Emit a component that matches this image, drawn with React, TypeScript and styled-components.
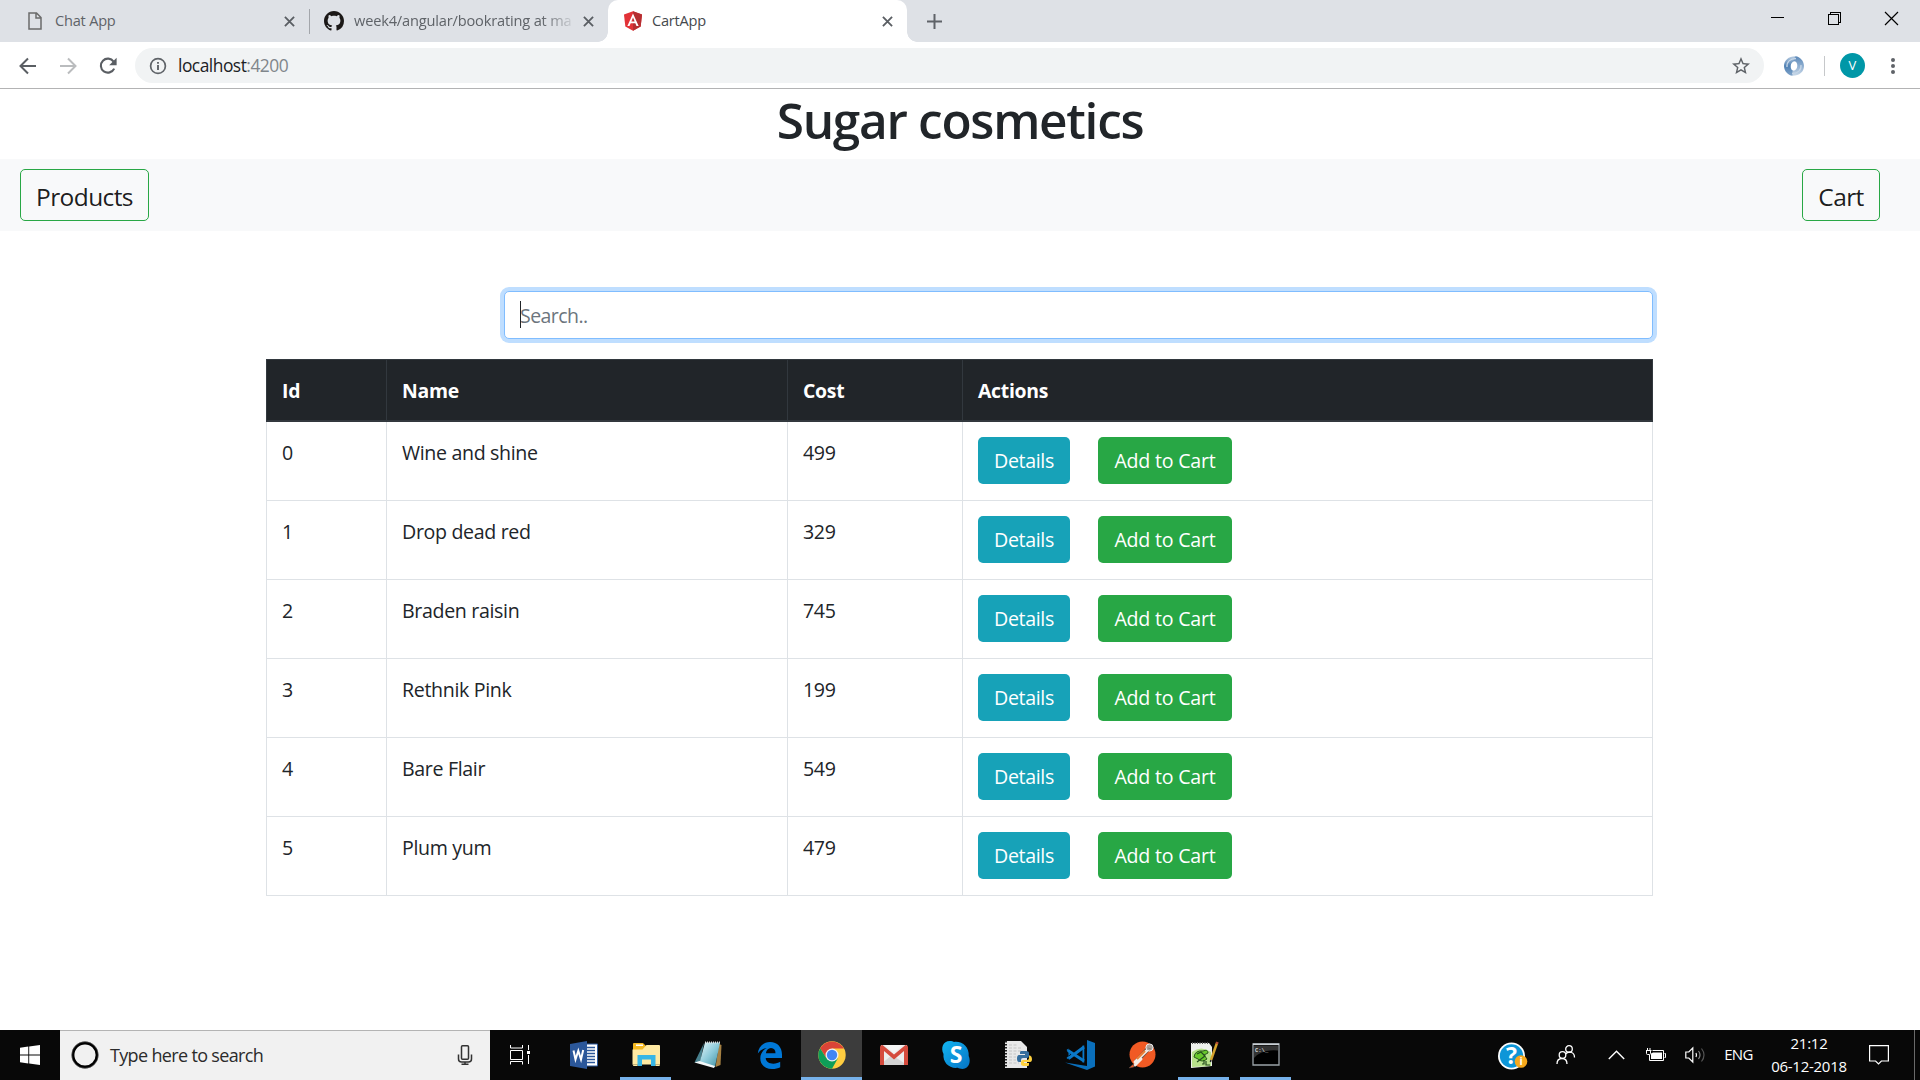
import React from "react";
import styled, { createGlobalStyle } from "styled-components";

const GlobalStyle = createGlobalStyle`
  *, *::before, *::after { box-sizing: border-box; }
  html, body { margin: 0; padding: 0; background: #fff; }
  body { font-family: "Open Sans", "Noto Sans", sans-serif; font-size: 20px; line-height: 1.5; color: #212529; overflow: hidden; }
  svg { display: block; flex: none; overflow: visible; }
`;

const Screen = styled.div`
  display: flex;
  flex-direction: column;
  width: 1920px;
  height: 1080px;
  overflow: hidden;
`;

/* ---------- browser chrome ---------- */

const TabStrip = styled.div`
  display: flex;
  height: 42px;
  background: #dee1e6;
  flex: none;
`;

const Tab = styled.div<{ $width: number; $left: number; $active?: boolean }>`
  position: relative;
  display: flex;
  align-items: center;
  width: ${(p) => p.$width}px;
  padding-left: ${(p) => p.$left}px;
  padding-right: 14px;
  background: ${(p) => (p.$active ? "#fff" : "transparent")};
  border-radius: ${(p) => (p.$active ? "10px 10px 0 0" : "0")};
  color: ${(p) => (p.$active ? "#45494d" : "#5f6368")};
  ${(p) =>
    p.$active &&
    `&::before, &::after {
      content: "";
      position: absolute;
      bottom: 0;
      width: 10px;
      height: 10px;
    }
    &::before { left: -10px; background: radial-gradient(circle at 0 0, transparent 9.5px, #fff 10px); }
    &::after { right: -10px; background: radial-gradient(circle at 100% 0, transparent 9.5px, #fff 10px); }`}
`;

const TabTitle = styled.span<{ $gap: number; $fade?: boolean }>`
  flex: 1;
  min-width: 0;
  margin-left: ${(p) => p.$gap}px;
  margin-right: ${(p) => (p.$fade ? 6 : 9)}px;
  padding-bottom: 2px;
  font-size: 14.6px;
  letter-spacing: ${(p) => (p.$fade ? -0.17 : -0.22)}px;
  line-height: 22px;
  white-space: nowrap;
  ${(p) => p.$fade && "mask-image: linear-gradient(90deg, #000 84%, transparent 100%);"}
`;

const TabDivider = styled.div`
  width: 1px;
  height: 25px;
  margin-top: 9px;
  background: #a3a6ab;
`;

const NewTab = styled.div`
  display: flex;
  align-items: center;
  margin-left: 20px;
`;

const WindowControls = styled.div`
  display: flex;
  align-items: flex-start;
  gap: 44px;
  margin-left: auto;
  padding: 12px 22px 0 0;
`;

const Toolbar = styled.div`
  display: flex;
  align-items: center;
  height: 47px;
  padding: 1px 24px 0 18px;
  border-bottom: 1px solid #b3b3b4;
  background: #fff;
  flex: none;
`;

const NavIcons = styled.div`
  display: flex;
  gap: 20px;
  width: 117px;
`;

const Omnibox = styled.div`
  display: flex;
  align-items: center;
  width: 1629px;
  height: 35px;
  padding: 0 14px 0 14px;
  border-radius: 18px;
  background: #f1f3f4;
`;

const Url = styled.span`
  flex: 1;
  margin-left: 11px;
  padding-bottom: 2px;
  font-size: 17.4px;
  letter-spacing: -0.5px;
  line-height: 26px;
  color: #202124;
`;

const Port = styled.span`
  color: #80868b;
`;

const ExtensionSlot = styled.div`
  margin-left: 20px;
`;

const ToolbarDivider = styled.div`
  width: 1px;
  height: 20px;
  margin: 0 15px 0 20px;
  background: #c6c8ca;
`;

const Avatar = styled.div`
  width: 25px;
  height: 25px;
  margin-right: auto;
  border-radius: 50%;
  background: #0097a7;
  color: #fff;
  font-size: 13px;
  line-height: 24px;
  text-align: center;
`;

/* ---------- shop page ---------- */

const Page = styled.main`
  flex: 1;
  display: flex;
  flex-direction: column;
  background: #fff;
`;

const Title = styled.h1`
  margin: 0 0 9px;
  padding-top: 1px;
  font-size: 49.5px;
  font-weight: 600;
  letter-spacing: -1.28px;
  line-height: 60px;
  text-align: center;
`;

const NavBar = styled.nav`
  display: flex;
  justify-content: space-between;
  height: 72px;
  padding: 10px 40px 10px 20px;
  background: #f8f9fa;
`;

const NavButton = styled.button<{ $width: number }>`
  width: ${(p) => p.$width}px;
  height: 52px;
  padding: 3px 0 0;
  border: 1px solid #28a745;
  border-radius: 5px;
  background: transparent;
  color: rgba(0, 0, 0, 0.9);
  font: 24.5px/47px "Open Sans", "Noto Sans", sans-serif;
  letter-spacing: -0.6px;
  white-space: nowrap;
`;

const Container = styled.section`
  display: flex;
  flex-direction: column;
  width: 1387px;
  margin: 60px 0 0 266px;
`;

const SearchField = styled.div`
  position: relative;
  align-self: flex-end;
  width: 1149px;
  height: 48px;
  margin-bottom: 20px;
`;

const SearchInput = styled.input`
  width: 100%;
  height: 100%;
  padding: 0 15px;
  border: 1px solid #80bdff;
  border-radius: 5px;
  outline: none;
  box-shadow: 0 0 0 4px #bfdeff;
  font: 19.5px "Open Sans", "Noto Sans", sans-serif;
  letter-spacing: -0.55px;
  &::placeholder { color: #6c757d; opacity: 1; }
`;

const Caret = styled.span`
  position: absolute;
  left: 16px;
  top: 10px;
  width: 1px;
  height: 27px;
  background: #212529;
`;

const Table = styled.div`
  display: flex;
  flex-direction: column;
`;

const columns = "120px 401px 175px 691px";

const HeadRow = styled.div`
  display: grid;
  grid-template-columns: ${columns};
  height: 63px;
  background: #212529;
  border-top: 1px solid #32383e;
  border-bottom: 2px solid #32383e;
  color: #fff;
  font-weight: 700;
`;

const BodyRow = styled.div`
  display: grid;
  grid-template-columns: ${columns};
  height: 79px;
  border-bottom: 1px solid #dee2e6;
`;

const Cell = styled.div<{ $head?: boolean }>`
  padding: 16px 15px 14px;
  border-left: 1px solid ${(p) => (p.$head ? "#32383e" : "#dee2e6")};
  font-size: ${(p) => (p.$head ? 19.4 : 19.6)}px;
  letter-spacing: ${(p) => (p.$head ? -0.28 : -0.34)}px;
  line-height: 30px;
  &:last-child { border-right: 1px solid ${(p) => (p.$head ? "#32383e" : "#dee2e6")}; }
`;

const ActionCell = styled(Cell)`
  display: flex;
  align-items: flex-start;
  gap: 28px;
  padding-top: 15px;
`;

const ActionButton = styled.button<{ $tone: "info" | "success" }>`
  width: ${(p) => (p.$tone === "info" ? 92 : 134)}px;
  height: 47px;
  padding: 0;
  border: 0;
  border-radius: 5px;
  background: ${(p) => (p.$tone === "info" ? "#17a2b8" : "#28a745")};
  color: #fff;
  font: 19.6px/46px "Open Sans", "Noto Sans", sans-serif;
  letter-spacing: ${(p) => (p.$tone === "info" ? -0.35 : -0.22)}px;
  white-space: nowrap;
`;

/* ---------- taskbar ---------- */

const Taskbar = styled.footer`
  display: flex;
  height: 50px;
  background: #080808;
  color: #fff;
  flex: none;
`;

const StartButton = styled.div`
  display: flex;
  align-items: center;
  width: 60px;
  padding-left: 20px;
`;

const CortanaBox = styled.div`
  display: flex;
  align-items: center;
  width: 430px;
  padding: 0 17px 1px 11px;
  border-top: 1px solid #b4b4b4;
  background: #f1f1f1;
  color: #2b2b2b;
`;

const CortanaText = styled.span`
  flex: 1;
  margin-left: 11px;
  font-size: 18px;
  letter-spacing: -0.66px;
  line-height: 28px;
`;

const AppSlots = styled.div`
  display: flex;
  margin-left: -1px;
`;

const AppSlot = styled.div<{ $state?: "open" | "focused" }>`
  display: flex;
  flex-direction: column;
  align-items: center;
  justify-content: space-between;
  width: ${(p) => (p.$state === "focused" ? 61 : 62)}px;
  margin-right: ${(p) => (p.$state === "focused" ? 0.5 : 0)}px;
  margin-left: ${(p) => (p.$state === "focused" ? 0.5 : 0)}px;
  height: 50px;
  padding-top: 10px;
  background: ${(p) => (p.$state === "focused" ? "#3c3c3c" : "transparent")};
  &:first-child { margin-right: 1.5px; }
  &::after {
    content: "";
    height: 3px;
    width: ${(p) => (p.$state === "focused" ? 61 : 51)}px;
    background: ${(p) => (p.$state ? "#76b1ea" : "transparent")};
  }
`;

const Tray = styled.div`
  display: flex;
  align-items: center;
  margin-left: auto;
`;

const TrayItem = styled.div<{ $width: number }>`
  display: flex;
  justify-content: center;
  width: ${(p) => p.$width}px;
`;

const NotificationSlot = styled.div`
  display: flex;
  justify-content: flex-end;
  width: 56px;
  padding-right: 25px;
`;

const Language = styled.span`
  font-size: 15px;
  letter-spacing: -0.6px;
  line-height: 20px;
  padding-bottom: 2px;
`;

const Clock = styled.div`
  width: 98px;
  margin-left: 1px;
  font-size: 15px;
  letter-spacing: -0.27px;
  line-height: 23px;
  text-align: center;
  white-space: nowrap;
  padding-bottom: 1px;
`;

const ShowDesktop = styled.div`
  width: 6px;
  height: 50px;
  border-left: 1px solid #6a6a6a;
`;

/* ---------- chrome icons ---------- */

const PageIcon = () => (
  <svg width="14" height="18" viewBox="0 0 14 18" fill="none" stroke="#6b6b6b" strokeWidth="1.5">
    <path d="M1 1h7.5L13 5.5V17H1zM8 1v5h5" />
  </svg>
);

const GithubIcon = () => (
  <svg width="20" height="20" viewBox="0 0 16 16" fill="#1b1817">
    <path d="M8 0C3.58 0 0 3.58 0 8c0 3.54 2.29 6.53 5.47 7.59.4.07.55-.17.55-.38 0-.19-.01-.82-.01-1.49-2.01.37-2.53-.49-2.69-.94-.09-.23-.48-.94-.82-1.13-.28-.15-.68-.52-.01-.53.63-.01 1.08.58 1.23.82.72 1.21 1.87.87 2.33.66.07-.52.28-.87.51-1.07-1.78-.2-3.64-.89-3.64-3.95 0-.87.31-1.59.82-2.15-.08-.2-.36-1.02.08-2.12 0 0 .67-.21 2.2.82.64-.18 1.32-.27 2-.27s1.36.09 2 .27c1.53-1.04 2.2-.82 2.2-.82.44 1.1.16 1.92.08 2.12.51.56.82 1.27.82 2.15 0 3.07-1.87 3.75-3.65 3.95.29.25.54.73.54 1.48 0 1.07-.01 1.93-.01 2.2 0 .21.15.46.55.38A8.01 8.01 0 0 0 16 8c0-4.42-3.58-8-8-8z" />
  </svg>
);

const AngularIcon = () => (
  <svg width="20" height="20" viewBox="25 22 200 206">
    <path fill="#e23237" d="M125 25 32 58l14 123 79 44 79-44 14-123z" />
    <path fill="#b52e31" d="M125 25v200l79-44 14-123z" />
    <path fill="#fff" d="M125 47 67 177h22l12-29h48l12 29h22zm17 83h-34l17-41z" />
  </svg>
);

const CrossIcon = () => (
  <svg width="11" height="11" viewBox="0 0 12 12" stroke="#5a5e63" strokeWidth="2">
    <path d="M1 1l10 10M11 1 1 11" />
  </svg>
);

const PlusIcon = () => (
  <svg width="15" height="15" viewBox="0 0 15 15" stroke="#5f6368" strokeWidth="2">
    <path d="M7.5 0v15M0 7.5h15" />
  </svg>
);

const MinimizeIcon = () => (
  <svg width="13" height="13" viewBox="0 0 13 13" stroke="#000" shapeRendering="crispEdges">
    <path d="M0 5.5h13" />
  </svg>
);

const RestoreIcon = () => (
  <svg width="13" height="13" viewBox="0 0 13 13" fill="none" stroke="#000" shapeRendering="crispEdges">
    <path d="M.5 2.5h10v10H.5zM2.5 2.5v-2h10v10h-2" />
  </svg>
);

const WindowCloseIcon = () => (
  <svg width="13" height="13" viewBox="0 0 13 13" stroke="#000" strokeWidth="1.2">
    <path d="M0 0l13 13M13 0 0 13" />
  </svg>
);

const ArrowIcon = ({ forward }: { forward?: boolean }) => (
  <svg width="20" height="20" viewBox="0 0 20 20" fill="none" stroke={forward ? "#babcbe" : "#5a5e63"} strokeWidth="2">
    {forward ? <path d="M2 10h15M10 2.5l7.5 7.5-7.5 7.5" /> : <path d="M18 10H3M10 2.5 2.5 10l7.5 7.5" />}
  </svg>
);

const ReloadIcon = () => (
  <svg width="20" height="20" viewBox="0 0 20 20">
    <path d="M16.2 12.6A7 7 0 1 1 15.6 5.6" fill="none" stroke="#5a5e63" strokeWidth="2.1" />
    <path d="M18.6 1.8v7.4h-7.4z" fill="#5a5e63" />
  </svg>
);

const InfoIcon = () => (
  <svg width="18" height="18" viewBox="0 0 18 18" fill="none" stroke="#5f6368">
    <circle cx="9" cy="9" r="7.4" strokeWidth="1.7" />
    <path d="M9 8v5M9 5v1.8" strokeWidth="1.9" />
  </svg>
);

const StarIcon = () => (
  <svg width="18" height="18" viewBox="2 2 20 20" fill="#5f6368">
    <path d="M22 9.24l-7.19-.62L12 2 9.19 8.63 2 9.24l5.46 4.73L5.82 21 12 17.27 18.18 21l-1.63-7.03L22 9.24zM12 15.4l-3.76 2.27 1-4.28-3.32-2.88 4.38-.38L12 6.1l1.71 4.04 4.38.38-3.32 2.88 1 4.28L12 15.4z" />
  </svg>
);

const JsonViewIcon = () => (
  <svg width="20" height="20" viewBox="0 0 20 20">
    <defs>
      <linearGradient id="ringLeft" x1="0" y1="0" x2="0" y2="1">
        <stop offset="0" stopColor="#b9cde2" />
        <stop offset=".5" stopColor="#4f80b3" />
        <stop offset="1" stopColor="#7fa3c9" />
      </linearGradient>
      <linearGradient id="ringRight" x1="0" y1="0" x2="0" y2="1">
        <stop offset="0" stopColor="#5b88b8" />
        <stop offset=".5" stopColor="#8eaed0" />
        <stop offset="1" stopColor="#c9d9e9" />
      </linearGradient>
    </defs>
    <path fill="url(#ringLeft)" d="M11.5.2C5 0 0 4 0 10c0 5 4 9.400 8.500 9.800l2.500-4.600C8 15 6.500 13 6.700 10c.2-3 2-4.800 4.800-5z" />
    <path fill="url(#ringRight)" d="M8.500 19.800C15 20 20 16 20 10 20 5 16 .6 11.500.2L9 4.800c3 .2 4.500 2.200 4.300 5.200-.2 3-2 4.800-4.800 5z" />
    <path fill="none" stroke="#c6d6e7" strokeWidth="1.300" d="M3 11C2.500 6 6 2.500 12 2.500M17 9c.5 5-3 8.500-9 8.500" />
  </svg>
);

const DotsIcon = () => (
  <svg width="6" height="18" viewBox="0 0 6 18" fill="#5f6368">
    <circle cx="3" cy="3" r="2" />
    <circle cx="3" cy="9" r="2" />
    <circle cx="3" cy="15" r="2" />
  </svg>
);

/* ---------- taskbar icons ---------- */

const WindowsIcon = () => (
  <svg width="20" height="20" viewBox="0 0 20 20" fill="#fff">
    <path d="M0 2.700 8.300 1.500v8H0zM9.200 1.400 20 0v9.500H9.200zM0 10.400h8.300v8L0 17.300zM9.200 10.400H20V20L9.200 18.600z" />
  </svg>
);

const CortanaIcon = () => (
  <svg width="28" height="28" viewBox="0 0 28 28" fill="none">
    <circle cx="14" cy="14" r="12" stroke="#000" strokeWidth="2.800" />
    <circle cx="14" cy="14" r="13.300" stroke="#777" strokeOpacity=".5" strokeWidth="1" />
  </svg>
);

const MicIcon = () => (
  <svg width="16" height="20" viewBox="0 0 16 20" fill="none" stroke="#333" strokeWidth="1.500">
    <rect x="4.500" y=".8" width="7" height="13.500" rx="1" />
    <path d="M1.500 9.500v4.500q0 3 3 3h7q3 0 3-3V9.500M8 17v2.300M4.500 19.300h7" />
  </svg>
);

const TaskViewIcon = () => (
  <svg width="20" height="30" viewBox="0 0 20 30" fill="none" stroke="#fff">
    <path d="M.5 10.500h12v9H.5zM.5 5v3h12V5M.5 24.500v-3h12v3M18.500 5v5M18.500 15v9" />
    <path d="M17 11h3v3h-3z" fill="#fff" stroke="none" />
  </svg>
);

const WordIcon = () => (
  <svg width="28" height="30" viewBox="0 0 28 30">
    <path fill="#fff" stroke="#2b579a" d="M15 4h12.500v22H15z" />
    <path stroke="#2b579a" strokeWidth="1.300" d="M17 7.500h8M17 10.500h8M17 13.500h8M17 16.500h8M17 19.500h8M17 22.500h8" />
    <path fill="#2b579a" d="M0 4 17 1v28L0 26z" />
    <path fill="none" stroke="#fff" strokeWidth="2" d="m3.500 10.500 2 9 2.800-8.700 2.700 8.700 2.200-9.400" />
  </svg>
);

const FolderIcon = () => (
  <svg width="28" height="30" viewBox="0 0 28 30">
    <path fill="#f5b921" d="M1 4q0-1 1-1h9l3 3v4H1z" />
    <path fill="#ffe9a2" d="M.5 9.500h10l4-4.500H27q1 0 1 1v18.500H.5z" />
    <path fill="#fff" d="M4 4.500h7v1.500H4z" />
    <path fill="#38b6e6" d="M5.500 15h18v11H19v-6.500h-9V26H5.500z" />
    <path fill="#ffe9a2" d="M.5 24.500h5V26h-4zM23.500 24.500H28l-.5 1.500h-4z" />
  </svg>
);

const NotepadIcon = () => (
  <svg width="28" height="30" viewBox="0 0 28 30">
    <defs>
      <linearGradient id="note" x1="0" y1="0" x2="1" y2="1">
        <stop offset="0" stopColor="#e5f6fa" />
        <stop offset=".5" stopColor="#8ecbda" />
        <stop offset="1" stopColor="#3c8d9e" />
      </linearGradient>
    </defs>
    <path fill="#a68143" d="m25 4 2.500 1-1 20-5 2z" />
    <path fill="#477f8c" d="M10 3 .5 22.500 6 23z" />
    <path fill="url(#note)" d="M11 2.500h15L21 27 5.500 23z" />
    <path fill="#f4f8f9" d="m.5 22.500 5-1.500L21 26l-1 2z" />
    <path stroke="#ddd" strokeWidth="2" strokeDasharray="1 1" d="M11 2.500h15" />
  </svg>
);

const EdgeIcon = () => (
  <svg width="26" height="30" viewBox="0 0 26 30">
    <path fill="#0078d7" d="M.8 13.500C1.500 6.500 6.500 2 13 2c7.500 0 12 5.400 12 12.500V18H8.700c.2 4 3.600 5.700 7.500 5.700 3 0 5.200-.9 7-1.900v5.400c-2 1-4.800 1.800-8.200 1.800C7.800 29 3.300 24.600 3.300 18.300c0-4.600 2.500-8.300 6.700-10.200-3.800.3-7.100 2.300-9.200 5.400zm8.100-.3h9.600c0-3-1.500-5.200-4.500-5.200-2.800 0-4.600 2.200-5.100 5.200z" />
  </svg>
);

const ChromeIcon = () => (
  <svg width="28" height="30" viewBox="0 -1 28 30">
    <circle cx="14" cy="14" r="13.700" fill="#ffcd40" />
    <path fill="#db4437" d="M2.140 7.150A13.700 13.700 0 0 1 25.860 7.500H14L8.500 17.200z" />
    <path fill="#0f9d58" d="M2.140 7.150A13.700 13.700 0 0 0 14 27.700L19.800 17.500 8.400 17.300z" />
    <circle cx="14" cy="14" r="6.500" fill="#f1f1f1" />
    <circle cx="14" cy="14" r="5.200" fill="#4285f4" />
  </svg>
);

const GmailIcon = () => (
  <svg width="28" height="30" viewBox="0 0 28 30">
    <path fill="#ededed" d="M1 5h26v20H1z" />
    <path fill="#d4d4d4" d="m1 24 11-9 15 10H1z" />
    <path fill="#f5f5f5" d="M5 5h18l-9 8z" />
    <path fill="#d54b3d" d="M0 25V7q0-2 2.500-2L14 14.500 25.500 5Q28 5 28 7v18h-4V11l-10 8.500L4 11v14z" />
  </svg>
);

const SkypeText = styled.text`
  font: 700 23px "Open Sans", sans-serif;
  fill: #fff;
  text-anchor: middle;
`;

const SkypeIcon = () => (
  <svg width="28" height="30" viewBox="0 0 28 30">
    <defs>
      <linearGradient id="sky" x1="0" y1="0" x2="1" y2="1">
        <stop offset="0" stopColor="#12b5f1" />
        <stop offset="1" stopColor="#0573c5" />
      </linearGradient>
    </defs>
    <path fill="url(#sky)" d="M7.800 1c2 0 3 .4 4.200 1C20 .8 27.500 7 26.700 16c2.300 5.200.8 12.500-6.200 13-2 0-3.600-.6-4.700-1.200C7.500 29 .5 22.500 1.500 14-1.500 8 1 1.200 7.800 1z" />
    <SkypeText x="14" y="23">S</SkypeText>
  </svg>
);

const PythonFileIcon = () => (
  <svg width="28" height="30" viewBox="0 0 28 30">
    <path fill="#e8e8e8" d="M1 1h16l6 6v21H1z" />
    <path fill="none" stroke="#c4c4c4" strokeDasharray="3 1.500" d="M5 5h9M5 8h12M5 11h12M5 14h7M5 17h7M5 20h7M5 23h10" />
    <path stroke="#222" strokeWidth="2" strokeDasharray="1.500 1.500" d="M2 1v27" />
    <path fill="#366f9f" d="M20 11h-3q-1 0-1 1.500V14h5v1h-6q-2 0-2 3.500t2 3.500h2v-2q0-2 2-2h4q2 0 2-2v-3q0-2-3-2z" />
    <path fill="#ffd13e" d="M21 26h3q1 0 1-1.500V23h-5v-1h6q2 0 2-3t-2-3.500h-1V18q0 2-2 2h-4q-2 0-2 2v2q0 2 4 2z" />
  </svg>
);

const CodeIcon = () => (
  <svg width="30" height="30" viewBox="0 0 30 30">
    <path fill="#0a6fbb" d="m22 0 8 3v23.500L22 30zM0 22.500 22 26v4L7 25z" />
    <path fill="none" stroke="#0a78c8" strokeWidth="3" d="M19 7 3.500 18.500M3 10.500 19 21" />
    <path fill="#0a78c8" d="m1.500 10 2-1.500v11L1.500 18l4-4zM17.500 5.500h1.800v17h-1.800z" />
  </svg>
);

const PostmanIcon = () => (
  <svg width="28" height="30" viewBox="0 0 28 30">
    <circle cx="14.500" cy="14.500" r="13" fill="#f15a24" />
    <path fill="none" stroke="#6b554b" strokeWidth="4.600" d="M20 9 8 22" />
    <path fill="none" stroke="#f4ede6" strokeWidth="3" strokeLinecap="round" d="M20 9.500 7 22M13 19l-6 6" />
    <path stroke="#ed7e34" strokeWidth="2" d="M17 11 9 19" />
    <circle cx="21.500" cy="7.500" r="3.600" fill="#aaa098" stroke="#eee" />
    <path d="m1 28 4.500-4 .5 3zM20 8l3 1" fill="#f15a24" stroke="#555" strokeWidth=".4" />
  </svg>
);

const NotepadPlusIcon = () => (
  <svg width="30" height="30" viewBox="0 0 30 30">
    <path fill="#eef1ec" d="M2 3h18l3 4v19l-21 2z" />
    <path fill="#b8e28c" d="M3 12q9-7 19 0v14L3 27z" />
    <path stroke="#555" strokeWidth="2" strokeDasharray="1 1.500" d="M3 3h17" />
    <path fill="#68c82c" stroke="#29591d" d="M5 17q1-7 9-6 5-2 5 2l-4 2 3 4q-5 4-9 0z" />
    <path stroke="#234c1d" strokeWidth="1.200" fill="none" d="M8 14l4-2 4 4-4 3-4 3M13 24h2v-4M17 21v4h4" />
    <path stroke="#d6a32c" strokeWidth="2.500" d="M28 3 22 20" />
    <path stroke="#b84d35" strokeWidth="2.500" d="m28.500 2-.8 2" />
    <path stroke="#222" strokeWidth="1.500" d="m22 20-.6 2" />
  </svg>
);

const TerminalText = styled.text`
  font: 700 5.500px "Liberation Mono", monospace;
  fill: #d8d8d8;
`;

const TerminalIcon = () => (
  <svg width="28" height="30" viewBox="0 0 28 30">
    <path fill="#000" stroke="#9aa2a8" strokeWidth="1.300" d="M1 4h26v21H1z" />
    <path fill="#c9cfd4" d="M1 3.500h26V5H1z" />
    <path fill="#333" d="M2 5.500h24v5Q10 9 2 18z" />
    <TerminalText x="3" y="11.500">C:\_</TerminalText>
  </svg>
);

const HelpMark = styled.text<{ $size: number }>`
  font: 700 ${(p) => p.$size}px "Open Sans", sans-serif;
  fill: #fff;
  text-anchor: middle;
`;

const HelpIcon = () => (
  <svg width="30" height="26" viewBox="0 0 30 26">
    <circle cx="13.500" cy="14" r="13.500" fill="#fff" />
    <circle cx="13.500" cy="14" r="11.700" fill="#0d96d8" />
    <HelpMark $size={23} x="13.500" y="22.300">?</HelpMark>
    <circle cx="23" cy="19.500" r="6.300" fill="#f6a81c" />
    <HelpMark $size={10.5} x="23" y="23.300">i</HelpMark>
  </svg>
);

const PeopleIcon = () => (
  <svg width="20" height="20" viewBox="0 0 20 20" fill="none" stroke="#fff" strokeWidth="1.300">
    <circle cx="13" cy="4" r="3.300" />
    <circle cx="6.500" cy="10" r="3.300" />
    <path d="M1 19q0-5.500 5-5.500T11 19M9.500 9q3-3 6-1.500 3 1 3 5" />
  </svg>
);

const ChevronIcon = () => (
  <svg width="17" height="10" viewBox="0 0 17 10" fill="none" stroke="#fff" strokeWidth="1.400">
    <path d="m.8 9 7.700-7.700L16.200 9" />
  </svg>
);

const BatteryIcon = () => (
  <svg width="20" height="14" viewBox="0 0 20 14" fill="none" stroke="#fff">
    <path d="M6.500 2.500h11v10h-14V7M18.500 5.500h1v4h-1M.5 3v2.500q0 1 1 1h2q1 0 1-1V3M0 2.500h5.500M1.500 2V0M4 2V0" />
    <path fill="#fff" stroke="none" d="M5 5.500 7 4.500h9v6.500H5z" />
  </svg>
);

const SpeakerIcon = () => (
  <svg width="21" height="18" viewBox="0 0 21 18" fill="none" stroke="#fff" strokeWidth="1.200">
    <path d="M.8 6h3l4-4v14l-4-4h-3z" />
    <path d="M11 7q1 2 0 4" />
    <path stroke="#888" d="M13.500 5q3 4 0 8" />
    <path stroke="#555" d="M16.500 2.500q5 6.500 0 13" />
  </svg>
);

const NotificationIcon = () => (
  <svg width="20" height="20" viewBox="0 0 20 20" fill="none" stroke="#fff" strokeWidth="1.200">
    <path d="M.6.600h18.800v15.400h-7l-2.900 3-2.900-3H.6z" />
  </svg>
);

/* ---------- data ---------- */

const products = [
  { id: 0, name: "Wine and shine", cost: 499 },
  { id: 1, name: "Drop dead red", cost: 329 },
  { id: 2, name: "Braden raisin", cost: 745 },
  { id: 3, name: "Rethnik Pink", cost: 199 },
  { id: 4, name: "Bare Flair", cost: 549 },
  { id: 5, name: "Plum yum", cost: 479 },
];

const taskbarApps: { name: string; icon: React.ReactNode; state?: "open" | "focused" }[] = [
  { name: "taskview", icon: <TaskViewIcon /> },
  { name: "word", icon: <WordIcon /> },
  { name: "explorer", icon: <FolderIcon />, state: "open" },
  { name: "notepad", icon: <NotepadIcon /> },
  { name: "edge", icon: <EdgeIcon /> },
  { name: "chrome", icon: <ChromeIcon />, state: "focused" },
  { name: "gmail", icon: <GmailIcon /> },
  { name: "skype", icon: <SkypeIcon /> },
  { name: "python", icon: <PythonFileIcon /> },
  { name: "code", icon: <CodeIcon /> },
  { name: "postman", icon: <PostmanIcon /> },
  { name: "notepadpp", icon: <NotepadPlusIcon />, state: "open" },
  { name: "terminal", icon: <TerminalIcon />, state: "open" },
];

export default function App() {
  return (
    <Screen>
      <GlobalStyle />
      <TabStrip>
        <Tab $width={309} $left={28}>
          <PageIcon />
          <TabTitle $gap={13}>Chat App</TabTitle>
          <CrossIcon />
        </Tab>
        <TabDivider />
        <Tab $width={298} $left={14}>
          <GithubIcon />
          <TabTitle $gap={10} $fade>week4/angular/bookrating at ma</TabTitle>
          <CrossIcon />
        </Tab>
        <Tab $width={299} $left={15} $active>
          <AngularIcon />
          <TabTitle $gap={9}>CartApp</TabTitle>
          <CrossIcon />
        </Tab>
        <NewTab>
          <PlusIcon />
        </NewTab>
        <WindowControls>
          <MinimizeIcon />
          <RestoreIcon />
          <WindowCloseIcon />
        </WindowControls>
      </TabStrip>
      <Toolbar>
        <NavIcons>
          <ArrowIcon />
          <ArrowIcon forward />
          <ReloadIcon />
        </NavIcons>
        <Omnibox>
          <InfoIcon />
          <Url>localhost<Port>:4200</Port></Url>
          <StarIcon />
        </Omnibox>
        <ExtensionSlot>
          <JsonViewIcon />
        </ExtensionSlot>
        <ToolbarDivider />
        <Avatar>V</Avatar>
        <DotsIcon />
      </Toolbar>

      <Page>
        <Title>Sugar cosmetics</Title>
        <NavBar>
          <NavButton $width={129}>Products</NavButton>
          <NavButton $width={78}>Cart</NavButton>
        </NavBar>
        <Container>
          <SearchField>
            <SearchInput placeholder="Search.." />
            <Caret />
          </SearchField>
          <Table>
            <HeadRow>
              {["Id", "Name", "Cost", "Actions"].map((label) => (
                <Cell $head key={label}>{label}</Cell>
              ))}
            </HeadRow>
            {products.map((product) => (
              <BodyRow key={product.id}>
                <Cell>{product.id}</Cell>
                <Cell>{product.name}</Cell>
                <Cell>{product.cost}</Cell>
                <ActionCell>
                  <ActionButton $tone="info">Details</ActionButton>
                  <ActionButton $tone="success">Add to Cart</ActionButton>
                </ActionCell>
              </BodyRow>
            ))}
          </Table>
        </Container>
      </Page>

      <Taskbar>
        <StartButton>
          <WindowsIcon />
        </StartButton>
        <CortanaBox>
          <CortanaIcon />
          <CortanaText>Type here to search</CortanaText>
          <MicIcon />
        </CortanaBox>
        <AppSlots>
          {taskbarApps.map((app) => (
            <AppSlot key={app.name} $state={app.state}>{app.icon}</AppSlot>
          ))}
        </AppSlots>
        <Tray>
          <TrayItem $width={53}><HelpIcon /></TrayItem>
          <TrayItem $width={54}><PeopleIcon /></TrayItem>
          <TrayItem $width={46}><ChevronIcon /></TrayItem>
          <TrayItem $width={34}><BatteryIcon /></TrayItem>
          <TrayItem $width={45}><SpeakerIcon /></TrayItem>
          <TrayItem $width={41}><Language>ENG</Language></TrayItem>
          <Clock>21:12<br />06-12-2018</Clock>
          <NotificationSlot><NotificationIcon /></NotificationSlot>
          <ShowDesktop />
        </Tray>
      </Taskbar>
    </Screen>
  );
}
